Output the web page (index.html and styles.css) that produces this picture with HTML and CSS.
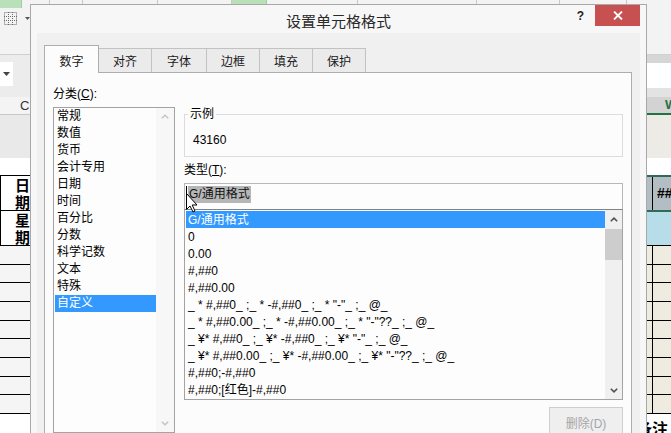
FILE: index.html
```html
<!DOCTYPE html>
<html>
<head>
<meta charset="utf-8">
<link rel="stylesheet" href="styles.css">
</head>
<body>
<div class="excel">
  <div class="ribbon">
    <div class="rib-top">
      <span class="g" style="width:22px"></span>
      <span style="width:28px"></span>
      <span style="width:33px"></span>
      <span style="width:75px"></span>
      <span style="width:74px"></span>
      <span class="g" style="width:35px"></span>
      <span style="width:91px"></span>
      <span style="width:119px"></span>
      <span style="width:83px"></span>
      <span style="width:67px"></span>
    </div>
    <div class="rib-icons">
      <svg width="13" height="13" viewBox="0 0 13 13"><g fill="none" stroke="#6a6a6a" stroke-width="1" stroke-dasharray="1 1"><rect x="0.5" y="0.5" width="12" height="12"/><line x1="4.5" y1="0" x2="4.5" y2="13"/><line x1="8.5" y1="0" x2="8.5" y2="13"/><line x1="0" y1="4.5" x2="13" y2="4.5"/><line x1="0" y1="8.5" x2="13" y2="8.5"/></g></svg>
      <svg class="dd" width="5" height="3" viewBox="0 0 5 3"><path d="M0 0H5L2.5 3Z" fill="#555"/></svg>
    </div>
  </div>
  <div class="lower">
    <div class="lcol">
      <div class="l-fbar"><div class="namebox"><svg width="7" height="4" viewBox="0 0 7 4"><path d="M0 0H7L3.5 4Z" fill="#444"/></svg></div></div>
      <div class="l-colhdr">C</div>
      <div class="l-band"></div>
      <div class="l-white"></div>
      <div class="l-head"><span class="vtext">日期</span></div>
      <div class="l-head"><span class="vtext">星期</span></div>
      <div class="l-rows">
        <div class="l-row"></div><div class="l-row"></div><div class="l-row"></div>
        <div class="l-row"></div><div class="l-row"></div><div class="l-row"></div>
        <div class="l-row"></div><div class="l-row"></div><div class="l-row"></div>
      </div>
      <div class="l-foot"></div>
    </div>
    <div class="rcol">
      <div class="r-f1"></div>
      <div class="r-f2"></div>
      <div class="r-f3"></div>
      <div class="r-colhdr">W</div>
      <div class="r-band"></div>
      <div class="r-white"></div>
      <div class="r-hash"><span>##</span></div>
      <div class="r-blue"></div>
      <div class="r-rows">
        <div class="r-row"></div><div class="r-row"></div><div class="r-row"></div>
        <div class="r-row"></div><div class="r-row"></div><div class="r-row"></div>
        <div class="r-row"></div><div class="r-row"></div><div class="r-row"></div>
      </div>
      <div class="r-foot">备注</div>
    </div>
  </div>
</div>

<div class="dialog">
  <div class="titlebar">
    <div class="title">设置单元格格式</div>
    <div class="tb-right">
      <span class="help">?</span>
      <span class="close"><svg width="10" height="9" viewBox="0 0 10 9"><path d="M1 0.5L9 8.5M9 0.5L1 8.5" stroke="#fff" stroke-width="1.8"/></svg></span>
    </div>
  </div>
  <div class="client">
    <div class="tabs">
      <div class="tab active w55">数字</div>
      <div class="tab w53">对齐</div>
      <div class="tab w55">字体</div>
      <div class="tab w53">边框</div>
      <div class="tab w53">填充</div>
      <div class="tab w53">保护</div>
    </div>
    <div class="panel">
      <div class="cat-col">
        <div class="label">分类(<u>C</u>):</div>
        <div class="listbox cat">
          <div class="items">
            <div class="item">常规</div>
            <div class="item">数值</div>
            <div class="item">货币</div>
            <div class="item">会计专用</div>
            <div class="item">日期</div>
            <div class="item">时间</div>
            <div class="item">百分比</div>
            <div class="item">分数</div>
            <div class="item">科学记数</div>
            <div class="item">文本</div>
            <div class="item">特殊</div>
            <div class="item sel">自定义</div>
          </div>
          <div class="vscroll disabled">
            <div class="sbtn"><svg width="8" height="5" viewBox="0 0 8 5"><path d="M0.8 4.3L4 1.2L7.2 4.3" fill="none" stroke="#c4c4c4" stroke-width="1.5"/></svg></div>
            <div class="track"></div>
            <div class="sbtn"><svg width="8" height="5" viewBox="0 0 8 5"><path d="M0.8 0.7L4 3.8L7.2 0.7" fill="none" stroke="#c4c4c4" stroke-width="1.5"/></svg></div>
          </div>
        </div>
      </div>
      <div class="main-col">
        <div class="sample">
          <span class="legend">示例</span>
          <div class="sample-value">43160</div>
        </div>
        <div class="label lbl-type">类型(<u>T</u>):</div>
        <div class="typebox"><span class="hl">G/通用格式</span></div>
        <div class="listbox types">
          <div class="items">
            <div class="item sel">G/通用格式</div>
            <div class="item">0</div>
            <div class="item">0.00</div>
            <div class="item">#,##0</div>
            <div class="item">#,##0.00</div>
            <div class="item">_ * #,##0_ ;_ * -#,##0_ ;_ * "-"_ ;_ @_</div>
            <div class="item">_ * #,##0.00_ ;_ * -#,##0.00_ ;_ * "-"??_ ;_ @_</div>
            <div class="item">_ ¥* #,##0_ ;_ ¥* -#,##0_ ;_ ¥* "-"_ ;_ @_</div>
            <div class="item">_ ¥* #,##0.00_ ;_ ¥* -#,##0.00_ ;_ ¥* "-"??_ ;_ @_</div>
            <div class="item">#,##0;-#,##0</div>
            <div class="item">#,##0;[红色]-#,##0</div>
          </div>
          <div class="vscroll">
            <div class="sbtn up"><svg width="8" height="5" viewBox="0 0 8 5"><path d="M0.8 4.3L4 1.2L7.2 4.3" fill="none" stroke="#505050" stroke-width="1.6"/></svg></div>
            <div class="thumb"></div>
            <div class="track"></div>
            <div class="sbtn"><svg width="8" height="5" viewBox="0 0 8 5"><path d="M0.8 0.7L4 3.8L7.2 0.7" fill="none" stroke="#505050" stroke-width="1.6"/></svg></div>
          </div>
        </div>
        <div class="btnrow"><button class="btn" disabled>删除(D)</button></div>
      </div>
    </div>
  </div>
</div>

<svg class="cursor" width="15" height="28" viewBox="0 0 15 28">
  <line x1="2.5" y1="1" x2="2.5" y2="15" stroke="#000" stroke-width="1"/>
  <path d="M2.5 8.5L2.5 24.5L6 21L9 27L11 26L8.2 20L13 20Z" fill="#fff" stroke="#000" stroke-width="1" stroke-linejoin="miter"/>
</svg>
</body>
</html>
```
FILE: styles.css
```css
* { box-sizing: border-box; }
html, body { margin: 0; padding: 0; }
body {
  width: 671px;
  height: 433px;
  overflow: hidden;
  position: relative;
  background: #f0f0f0;
  font-family: "Liberation Sans", "Noto Sans CJK SC", sans-serif;
  font-size: 12px;
  color: #000;
}

/* ---------- Excel background ---------- */
.excel { display: flex; flex-direction: column; height: 433px; }
.ribbon {
  height: 55px;
  flex: none;
  background: #f3f3f3;
  border-bottom: 1px solid #d0d0d0;
  display: flex;
  flex-direction: column;
}
.rib-top { display: flex; height: 8px; }
.rib-top span { height: 8px; border-right: 1px solid #c8c8c8; }
.rib-top .g { background: #b9e0b9; border-right-color: #9fcf9f; }
.rib-icons { display: flex; align-items: center; padding: 4px 0 0 4px; }
.rib-icons .dd { margin-left: 8px; }

.lower { flex: 1; display: flex; justify-content: space-between; }
.lcol { width: 31px; display: flex; flex-direction: column; overflow: hidden; }
.rcol { width: 24px; display: flex; flex-direction: column; overflow: hidden; }

.l-fbar { height: 42px; background: #ececec; padding-top: 7px; }
.namebox { width: 13px; height: 24px; background: #fff; display: flex; align-items: center; justify-content: center; }
.l-colhdr {
  height: 18px;
  background: #f4f4f4;
  border-bottom: 1px solid #c8c8c8;
  padding-left: 20px;
  font-size: 13px;
  line-height: 18px;
  color: #333;
}
.l-band { height: 43px; background: #e9e9e9; }
.l-white { height: 17px; background: #fff; }
.l-head {
  height: 35px;
  background: #fff;
  border-top: 1px solid #000;
  border-left: 1px solid #000;
  padding: 2px 0 0 14px;
  display: flex;
  align-items: flex-start;
}
.vtext {
  writing-mode: vertical-rl;
  white-space: nowrap;
  font-family: "Noto Sans CJK SC", sans-serif;
  font-weight: bold;
  font-size: 15px;
  line-height: 15px;
  letter-spacing: 2px;
}
.l-rows { border-top: 1px solid #000; display: flex; flex-direction: column; }
.l-row { height: 18.67px; border-bottom: 1px solid #000; background: #f5f5f5; }
.l-foot { flex: 1; background: #fff; }

.r-f1 { height: 8px; background: #d6d6d6; }
.r-f2 { height: 25px; background: #fff; }
.r-f3 { height: 9px; background: #e3e3e3; }
.r-colhdr {
  height: 18px;
  background: #d3d3d3;
  border-bottom: 2px solid #217346;
  padding-left: 18px;
  color: #217346;
  font-weight: bold;
  font-size: 13px;
  line-height: 16px;
}
.r-band { height: 43px; background: #ecebe6; }
.r-white { height: 17px; background: #fff; }
.r-hash {
  height: 37px;
  background: #b3bec4;
  border-top: 2px solid #2f6b57;
  border-bottom: 2px solid #2f6b57;
  display: flex;
}
.r-hash span {
  margin-left: 5px;
  border-left: 1px solid #000;
  padding-left: 4px;
  font-weight: bold;
  font-size: 14px;
  line-height: 33px;
}
.r-blue { height: 34px; background: #b7dde8; border-bottom: 1px solid #000; }
.r-rows {
  display: flex;
  flex-direction: column;
  background-color: #eeece1;
  background-image: linear-gradient(#000, #000);
  background-size: 1px 100%;
  background-position: 5px 0;
  background-repeat: no-repeat;
}
.r-row { height: 18.67px; border-bottom: 1px solid #000; }
.r-foot {
  flex: 1;
  background: #fff;
  padding-top: 4px;
  text-indent: -11px;
  white-space: nowrap;
  font-family: "Noto Sans CJK SC", sans-serif;
  font-weight: bold;
  font-size: 16px;
  line-height: 20px;
}

/* ---------- Dialog ---------- */
.dialog {
  position: absolute;
  left: 30px;
  top: 4px;
  width: 617px;
  height: 440px;
  z-index: 2;
  background: #f7f7f7;
  border: 1px solid #a8a8a8;
  padding: 0 6px;
  display: flex;
  flex-direction: column;
}
.titlebar {
  height: 28px;
  flex: none;
  display: grid;
  grid-template-columns: 1fr auto 1fr;
}
.title {
  grid-column: 2;
  font-family: "Noto Sans CJK SC", sans-serif;
  font-size: 15px;
  line-height: 26px;
  padding-top: 3px;
  color: #2a2a2a;
  white-space: nowrap;
}
.tb-right { grid-column: 3; display: flex; justify-content: flex-end; align-items: flex-start; }
.help {
  font-weight: bold;
  font-size: 12px;
  line-height: 14px;
  margin: 4px 11px 0 0;
  color: #222;
}
.close {
  width: 45px;
  height: 21px;
  background: #c75050;
  display: flex;
  align-items: center;
  justify-content: center;
}

.client {
  flex: 1;
  background: #f0f0f0;
  padding: 12px 0 0 7px;
  display: flex;
  flex-direction: column;
}
.tabs { display: flex; align-items: flex-end; height: 27px; flex: none; position: relative; z-index: 1; }
.tab {
  height: 24px;
  background: #ebebeb;
  border: 1px solid #c2c2c2;
  border-left: none;
  border-bottom: none;
  display: flex;
  align-items: center;
  justify-content: center;
  color: #1a1a1a;
}
.tab.active {
  height: 28px;
  margin-bottom: -1px;
  background: #fcfcfc;
  border: 1px solid #adadad;
  border-bottom: none;
  padding-top: 1px;
}
.w55 { width: 55px; }
.w53 { width: 53px; }

.panel {
  flex: 1;
  width: 588px;
  background: #fcfcfc;
  border: 1px solid #adadad;
  display: flex;
  gap: 9px;
  padding: 0 8px 0 8px;
}
.cat-col { width: 122px; display: flex; flex-direction: column; }
.main-col { width: 439px; display: flex; flex-direction: column; }
.label { line-height: 17px; margin-top: 13px; white-space: nowrap; }
.label u { text-underline-offset: 1px; }

.listbox { border: 1px solid #a3a3a3; background: #fdfdfd; display: flex; }
.listbox.cat { margin-top: 4px; height: 326px; }
.items { flex: 1; padding-left: 1px; min-width: 0; }
.item { height: 17px; line-height: 17px; padding-left: 2px; white-space: pre; overflow: hidden; }
.item.sel { background: #3399ff; color: #fff; }
.vscroll { width: 17px; display: flex; flex-direction: column; background: #f0f0f0; }
.cat .vscroll { width: 18px; background: #f7f7f7; }
.sbtn { height: 17px; display: flex; align-items: center; justify-content: center; flex: none; }
.sbtn.up { height: 19px; }
.thumb { height: 31px; background: #cdcdcd; flex: none; }
.track { flex: 1; }

.sample {
  margin-top: 41px;
  height: 43px;
  border: 1px solid #dcdcdc;
  display: flex;
  flex-direction: column;
  align-items: flex-start;
}
.legend {
  margin: -9px 0 0 3px;
  padding: 0 2px;
  background: #fcfcfc;
  line-height: 17px;
}
.sample-value { margin-top: 9px; padding-left: 8px; line-height: 17px; }
.lbl-type { margin-top: 5px; }
.typebox {
  margin-top: 4px;
  height: 26px;
  border: 1px solid #b8b8b8;
  border-bottom: none;
  background: #fdfdfd;
  padding: 2px 0 0 3px;
  display: flex;
  align-items: flex-start;
}
.typebox .hl { background: #b6b6b6; line-height: 17px; padding: 0 1px; color: #111; }
.listbox.types { height: 191px; border-color: #a3a3a3; border-top-color: #828282; }
.types .items { padding-top: 1px; }
.types .item { padding-top: 1px; line-height: 16px; }

.btnrow { display: flex; justify-content: flex-end; margin-top: 7px; }
.btn {
  width: 74px;
  height: 30px;
  border: 1px solid #cfcfcf;
  background: #efefef;
  color: #a6a6a6;
  font-family: "Liberation Sans", "Noto Sans CJK SC", sans-serif;
  font-size: 12px;
  padding: 0;
}

.cursor { position: absolute; left: 184px; top: 185px; z-index: 3; }
```
